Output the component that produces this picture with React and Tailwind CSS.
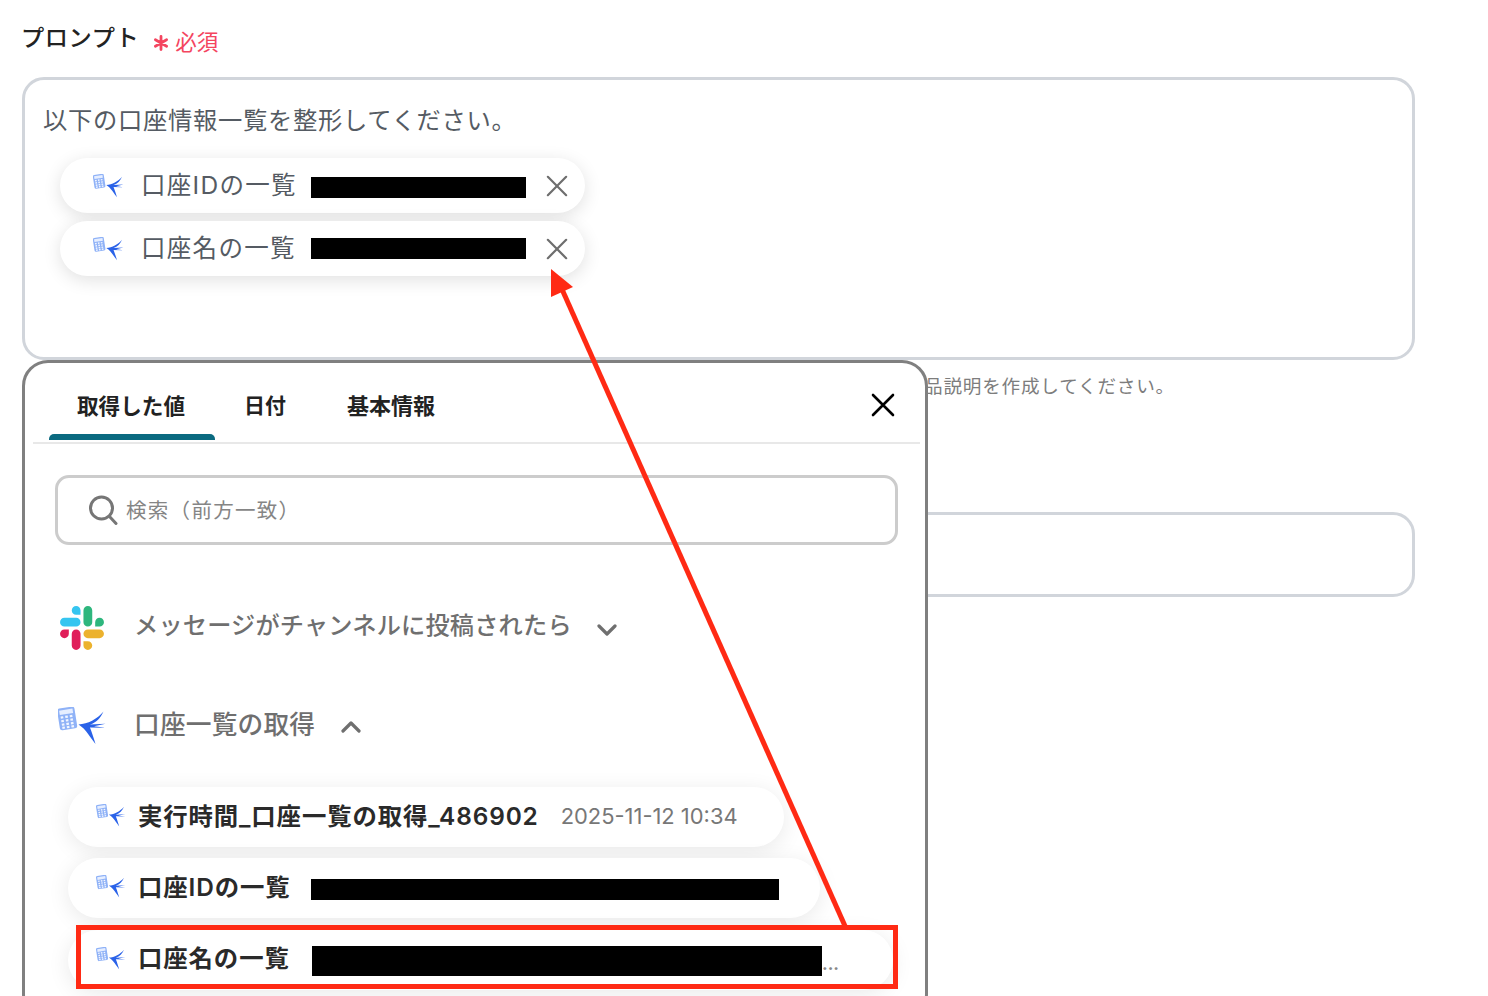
const font = { fontFamily: '"Inter", "Noto Sans CJK JP", sans-serif' };

function CalcBirdIcon({ className }) {
  return (
    <svg viewBox="0 0 48 38" className={className} aria-hidden="true">
      <g transform="rotate(-9 9 12)">
        <rect x="0.5" y="0.5" width="17.5" height="22" rx="2.5" fill="#8fb2f7" />
        <rect x="2.5" y="2.5" width="13.5" height="4.5" fill="#e6eeff" />
        {[9, 12.6, 16.2, 19.4].map((y) =>
          [3, 7.6, 12.2].map((x) => <rect key={`${x}-${y}`} x={x} y={y - 0.4} width="2.6" height="2.2" fill="#f2f6ff" />)
        )}
      </g>
      <path
        d="M20.5 17.5 C30 17 39 12 45.5 4.5 C42.5 11 38.5 15.5 32 17.6 L47.5 16.8 L36 19.2 L47.5 20.8 L32 20.4 C34.5 27 36 32 37.5 37 C32.5 31 28 22 20.5 17.5 Z"
        fill="#2a62e8"
      />
    </svg>
  );
}

function SlackIcon({ className }) {
  return (
    <svg viewBox="0 0 2447.6 2452.5" className={className} aria-hidden="true">
      <path d="m897.4 0c-135.3.1-244.8 109.9-244.7 245.2-.1 135.3 109.5 245.1 244.8 245.2h244.8v-245.1c.1-135.3-109.5-245.1-244.9-245.3.1 0 .1 0 0 0m0 654h-652.6c-135.3.1-244.9 109.9-244.8 245.2-.2 135.3 109.4 245.1 244.7 245.3h652.7c135.3-.1 244.9-109.9 244.8-245.2.1-135.4-109.5-245.2-244.8-245.3z" fill="#36c5f0" />
      <path d="m2447.6 899.2c.1-135.3-109.5-245.1-244.8-245.2-135.3.1-244.9 109.9-244.8 245.2v245.3h244.8c135.3-.1 244.9-109.9 244.8-245.3zm-652.7 0v-654c.1-135.2-109.4-245-244.7-245.2-135.3.1-244.9 109.9-244.8 245.2v654c-.2 135.3 109.4 245.1 244.7 245.3 135.3-.1 244.9-109.9 244.8-245.3z" fill="#2eb67d" />
      <path d="m1550.1 2452.5c135.3-.1 244.9-109.9 244.8-245.2.1-135.3-109.5-245.1-244.8-245.2h-244.8v245.2c-.1 135.2 109.5 245 244.8 245.2zm0-654.1h652.7c135.3-.1 244.9-109.9 244.8-245.2.2-135.3-109.4-245.1-244.7-245.3h-652.7c-135.3.1-244.9 109.9-244.8 245.2-.1 135.4 109.4 245.2 244.7 245.3z" fill="#ecb22e" />
      <path d="m0 1553.2c-.1 135.3 109.5 245.1 244.8 245.2 135.3-.1 244.9-109.9 244.8-245.2v-245.2h-244.8c-135.3.1-244.9 109.9-244.8 245.2zm652.7 0v654c-.2 135.3 109.4 245.1 244.7 245.3 135.3-.1 244.9-109.9 244.8-245.2v-653.9c.2-135.3-109.4-245.1-244.7-245.3-135.4 0-244.9 109.8-244.8 245.1 0 0 0 .1 0 0" fill="#e01e5a" />
    </svg>
  );
}

function Cross({ className, stroke, width }) {
  return (
    <svg viewBox="0 0 24 24" className={className} fill="none" stroke={stroke} strokeWidth={width} strokeLinecap="round" aria-hidden="true">
      <path d="M2 2 L22 22 M22 2 L2 22" />
    </svg>
  );
}

function Chevron({ up, className }) {
  return (
    <svg viewBox="0 0 20 12" className={className} fill="none" stroke="#6f6f6f" strokeWidth="3.2" strokeLinecap="round" strokeLinejoin="round" aria-hidden="true">
      <path d={up ? "M2 10 L10 2 L18 10" : "M2 2 L10 10 L18 2"} />
    </svg>
  );
}

function InputChip({ label, barTop }) {
  return (
    <div className="flex h-[55px] w-[525px] items-center rounded-full bg-white pl-[33px] shadow-[0_4px_18px_rgba(0,0,0,0.12)]">
      <CalcBirdIcon className="h-[24px] w-[31px] shrink-0" />
      <span className="ml-[17px] w-[170px] shrink-0 whitespace-nowrap text-[24.5px] leading-none tracking-[1.3px] text-[#555b63]">{label}</span>
      <div className={`h-[21px] w-[215px] shrink-0 bg-black ${barTop}`} />
      <Cross className="ml-[20px] h-[22px] w-[22px] shrink-0" stroke="#6e6e6e" width="2.4" />
    </div>
  );
}

function ListChip({ widthClass, children }) {
  return (
    <div className={`flex h-[60px] items-center rounded-full bg-white pl-[28px] shadow-[0_4px_22px_rgba(0,0,0,0.09)] ${widthClass}`}>
      <CalcBirdIcon className="mb-[3px] h-[23px] w-[30px] shrink-0" />
      {children}
    </div>
  );
}

export default function App() {
  return (
    <div className="relative h-[996px] w-[1488px] overflow-hidden bg-white" style={font}>
      {/* Underlying form */}
      <div className="pl-[22px] pt-[19px]">
        <div className="flex h-[38px] items-center">
          <span className="-ml-[1px] mt-[2px] text-[23.2px] font-medium leading-none tracking-[0.6px] text-[#222]">プロンプト</span>
          <span className="ml-[14px] mt-[9px] flex items-center text-[21.5px] leading-none text-[#f4455f]">
            <svg viewBox="0 0 16 16" className="mr-[6px] h-[16px] w-[16px]" fill="none" stroke="#f4455f" strokeWidth="2.8" strokeLinecap="round" aria-hidden="true">
              <path d="M8 1.5 V14.5 M2.4 4.8 L13.6 11.2 M13.6 4.8 L2.4 11.2" />
            </svg>
            必須
          </span>
        </div>
        <div className="mt-[20px] h-[283px] w-[1393px] rounded-[22px] border-[3px] border-[#d1d5db] pl-[18px] pt-[24px]">
          <p className="text-[24.3px] leading-[32px] tracking-[0.7px] text-[#555b63]">以下の口座情報一覧を整形してください。</p>
          <div className="ml-[17px] mt-[22px] flex flex-col gap-[8px]">
            <InputChip label="口座IDの一覧" barTop="mt-[4px]" />
            <InputChip label="口座名の一覧" barTop="-mt-[1px]" />
          </div>
        </div>
        <p className="ml-[902px] mt-[13px] text-[18.6px] leading-[26px] tracking-[0.8px] text-[#7d7d7d]">品説明を作成してください。</p>
        <div className="mt-[113px] h-[85px] w-[1393px] rounded-[22px] border-[3px] border-[#d1d5db]" />
      </div>

      {/* Value picker popover */}
      <div className="absolute left-[22px] top-[360px] h-[660px] w-[906px] overflow-hidden rounded-[26px] border-[3px] border-[#808080] bg-white">
        <div className="relative ml-[8px] mr-[5px] flex h-[81px] border-b-2 border-[#e8e8e8] pl-[16px]">
          <div className="flex w-[166px] flex-col items-center">
            <span className="mr-[2px] mt-[30px] text-[21.6px] font-semibold leading-[26px] text-[#222]">取得した値</span>
            <div className="mt-[15px] h-[6px] w-full rounded-t-[5px] bg-[#0b6a80]" />
          </div>
          <span className="ml-[29px] mt-[30px] text-[21px] font-semibold leading-[26px] text-[#222]">日付</span>
          <span className="ml-[61px] mt-[30px] text-[22px] font-semibold leading-[26px] text-[#222]">基本情報</span>
          <Cross className="absolute right-[25px] top-[30px] h-[24px] w-[24px]" stroke="#000" width="2.6" />
        </div>

        <div className="ml-[30px] mt-[31px] flex h-[70px] w-[843px] items-center rounded-[14px] border-[3px] border-[#cccccc] pl-[30px]">
          <svg viewBox="0 0 30 30" className="h-[30px] w-[30px] shrink-0" fill="none" stroke="#767676" strokeWidth="3" strokeLinecap="round" aria-hidden="true">
            <circle cx="13.5" cy="13" r="11" />
            <path d="M21.5 21.5 L28 28.5" />
          </svg>
          <span className="ml-[8px] mt-[2px] text-[20.5px] leading-none tracking-[1.3px] text-[#858585]">検索（前方一致）</span>
        </div>

        <div className="ml-[35px] mt-[61px] flex h-[44px] items-center">
          <SlackIcon className="h-[44px] w-[44px] shrink-0" />
          <span className="mb-[4px] ml-[30px] text-[24.2px] font-medium leading-none tracking-[0.2px] text-[#6f6f6f]">メッセージがチャンネルに投稿されたら</span>
          <Chevron className="ml-[25px] mt-[3px] h-[12px] w-[20px]" />
        </div>

        <div className="ml-[33px] mt-[57px] flex h-[38px] items-center">
          <CalcBirdIcon className="h-[38px] w-[48px] shrink-0" />
          <span className="mb-[2px] ml-[28px] text-[25.7px] font-medium leading-none tracking-[0.2px] text-[#6f6f6f]">口座一覧の取得</span>
          <Chevron up className="ml-[26px] mt-[2px] h-[12px] w-[20px]" />
        </div>

        <div className="ml-[43px] mt-[42px] flex flex-col">
          <ListChip widthClass="w-[716px]">
            <span className="mb-[2px] ml-[12px] whitespace-nowrap text-[24.4px] font-semibold leading-none tracking-[0.87px] text-[#2a2a2a]">実行時間_口座一覧の取得_486902</span>
            <span className="mb-[1px] ml-[22px] whitespace-nowrap text-[21.9px] leading-none text-[#777]">2025-11-12 10:34</span>
          </ListChip>
          <div className="mt-[11px]">
            <ListChip widthClass="w-[752px]">
              <span className="mb-[2px] ml-[12px] w-[173px] shrink-0 whitespace-nowrap text-[24.4px] font-semibold leading-none tracking-[0.9px] text-[#2a2a2a]">口座IDの一覧</span>
              <div className="mt-[2px] h-[21px] w-[468px] shrink-0 bg-black" />
            </ListChip>
          </div>
          <div className="mt-[12px]">
            <ListChip widthClass="w-[825px]">
              <span className="mb-[4px] ml-[12px] w-[174px] shrink-0 whitespace-nowrap text-[24.4px] font-semibold leading-none tracking-[0.9px] text-[#2a2a2a]">口座名の一覧</span>
              <div className="mt-[2px] h-[30px] w-[510px] shrink-0 bg-black" />
              <span className="mt-[8px] text-[17px] font-bold leading-none text-[#888]">...</span>
            </ListChip>
          </div>
        </div>
      </div>

      {/* Annotation overlays */}
      <div className="absolute left-[76px] top-[925px] h-[64px] w-[822px] border-[5px] border-[#ff2a14]" />
      <svg className="absolute left-0 top-0 h-[996px] w-[1488px]" viewBox="0 0 1488 996" fill="none" aria-hidden="true">
        <path d="M845 926 L561 287" stroke="#ff2a14" strokeWidth="5" />
        <path d="M551 269 L573 287 L551 297 Z" fill="#ff2a14" />
      </svg>
    </div>
  );
}
